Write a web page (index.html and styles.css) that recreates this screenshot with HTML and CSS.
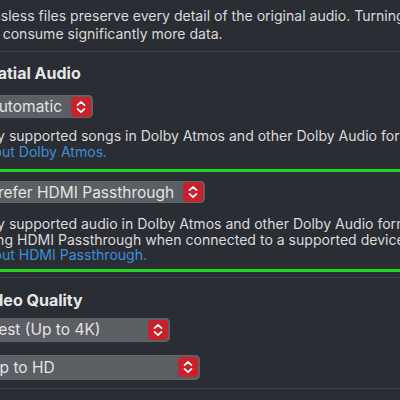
FILE: index.html
```html
<!DOCTYPE html>
<html>
<head>
<meta charset="utf-8">
<link rel="stylesheet" href="styles.css">
</head>
<body>
<div class="page">
  <p class="desc desc-top">Lossless files preserve every detail of the original audio. Turning on lossless<br>will consume significantly more data.</p>
  <div class="sep"></div>
  <h2 class="heading">Spatial Audio</h2>
  <div class="popup popup-auto">
    <span class="popup-label">Automatic</span>
    <span class="stepper"><svg viewBox="0 0 20 20" width="20" height="20"><path d="M6.5 8.2 L10 4.8 L13.5 8.2 M6.5 11.8 L10 15.2 L13.5 11.8" fill="none" stroke="#fff" stroke-width="1.7" stroke-linecap="round" stroke-linejoin="round"/></svg></span>
  </div>
  <p class="desc desc-spatial">Play supported songs in Dolby Atmos and other Dolby Audio formats. <a class="link">Learn more</a><br><a class="link">about Dolby Atmos.</a></p>
  <section class="highlight">
    <div class="popup popup-hdmi">
      <span class="popup-label">Prefer HDMI Passthrough</span>
      <span class="stepper"><svg viewBox="0 0 20 20" width="20" height="20"><path d="M6.5 8.2 L10 4.8 L13.5 8.2 M6.5 11.8 L10 15.2 L13.5 11.8" fill="none" stroke="#fff" stroke-width="1.7" stroke-linecap="round" stroke-linejoin="round"/></svg></span>
    </div>
    <p class="desc desc-hdmi">Play supported audio in Dolby Atmos and other Dolby Audio formats when<br>using HDMI Passthrough when connected to a supported device. <a class="link">Learn more</a><br><a class="link">about HDMI Passthrough.</a></p>
  </section>
  <div class="sep sep-after"></div>
  <h2 class="heading heading-video">Video Quality</h2>
  <div class="popup popup-best">
    <span class="popup-label">Best (Up to 4K)</span>
    <span class="stepper"><svg viewBox="0 0 20 20" width="20" height="20"><path d="M6.5 8.2 L10 4.8 L13.5 8.2 M6.5 11.8 L10 15.2 L13.5 11.8" fill="none" stroke="#fff" stroke-width="1.7" stroke-linecap="round" stroke-linejoin="round"/></svg></span>
  </div>
  <div class="popup popup-hd">
    <span class="popup-label">Up to HD</span>
    <span class="stepper"><svg viewBox="0 0 20 20" width="20" height="20"><path d="M6.5 8.2 L10 4.8 L13.5 8.2 M6.5 11.8 L10 15.2 L13.5 11.8" fill="none" stroke="#fff" stroke-width="1.7" stroke-linecap="round" stroke-linejoin="round"/></svg></span>
  </div>
  <div class="sep sep-bottom"></div>
</div>
</body>
</html>
```
FILE: styles.css
```css
html, body {
  margin: 0;
  padding: 0;
  background: #2a2d33;
  overflow: hidden;
}
body {
  width: 400px;
  height: 400px;
  font-family: Inter, "Noto Sans", sans-serif;
  color: #dcdcdd;
}
.page {
  margin-left: -23px;
  padding-top: 7px;
  display: flex;
  flex-direction: column;
  align-items: flex-start;
}
.desc {
  margin: 0;
  font-size: 14.05px;
  line-height: 18px;
  white-space: nowrap;
  color: #dadadb;
}
.sep {
  align-self: stretch;
  height: 1px;
  background: #41444a;
  margin-top: 8px;
  margin-right: -40px;
}
.heading {
  margin: 11px 0 0 0;
  font-size: 16px;
  line-height: 20px;
  font-weight: 700;
  color: #e6e6e7;
}
.popup {
  display: flex;
  align-items: center;
  justify-content: space-between;
  box-sizing: border-box;
  height: 23px;
  padding: 0 2px 0 11px;
  background: #5b5e63;
  border-radius: 5px;
  box-shadow: inset 0 0 0 0.5px #66696e;
  font-size: 15.5px;
  color: #e3e3e4;
}
.popup-auto {
  margin-top: 12px;
  width: 116px;
}
.stepper {
  width: 20px;
  height: 20px;
  border-radius: 4px;
  background: #c8212b;
  display: flex;
  align-items: center;
  justify-content: center;
}
.stepper svg {
  display: block;
}
.desc-spatial {
  margin-top: 10px;
  line-height: 16px;
}
.link {
  color: #3f8ed8;
}
.highlight {
  align-self: stretch;
  margin-right: -40px;
  margin-top: 9px;
  border-top: 3px solid #22d61f;
  border-bottom: 3px solid #22d61f;
  padding: 9px 0 6px 0;
  display: flex;
  flex-direction: column;
  align-items: flex-start;
}
.popup-hdmi {
  width: 228px;
  height: 22px;
}
.desc-hdmi {
  margin-top: 13px;
  line-height: 15.5px;
}
.sep-after {
  margin-top: 5px;
}
.heading-video {
  margin-top: 12px;
}
.popup-best {
  margin-top: 8px;
  width: 193px;
  height: 24px;
}
.popup-hd {
  margin-top: 13px;
  width: 223px;
  height: 25px;
}
.sep-bottom {
  margin-top: 8px;
}
```
